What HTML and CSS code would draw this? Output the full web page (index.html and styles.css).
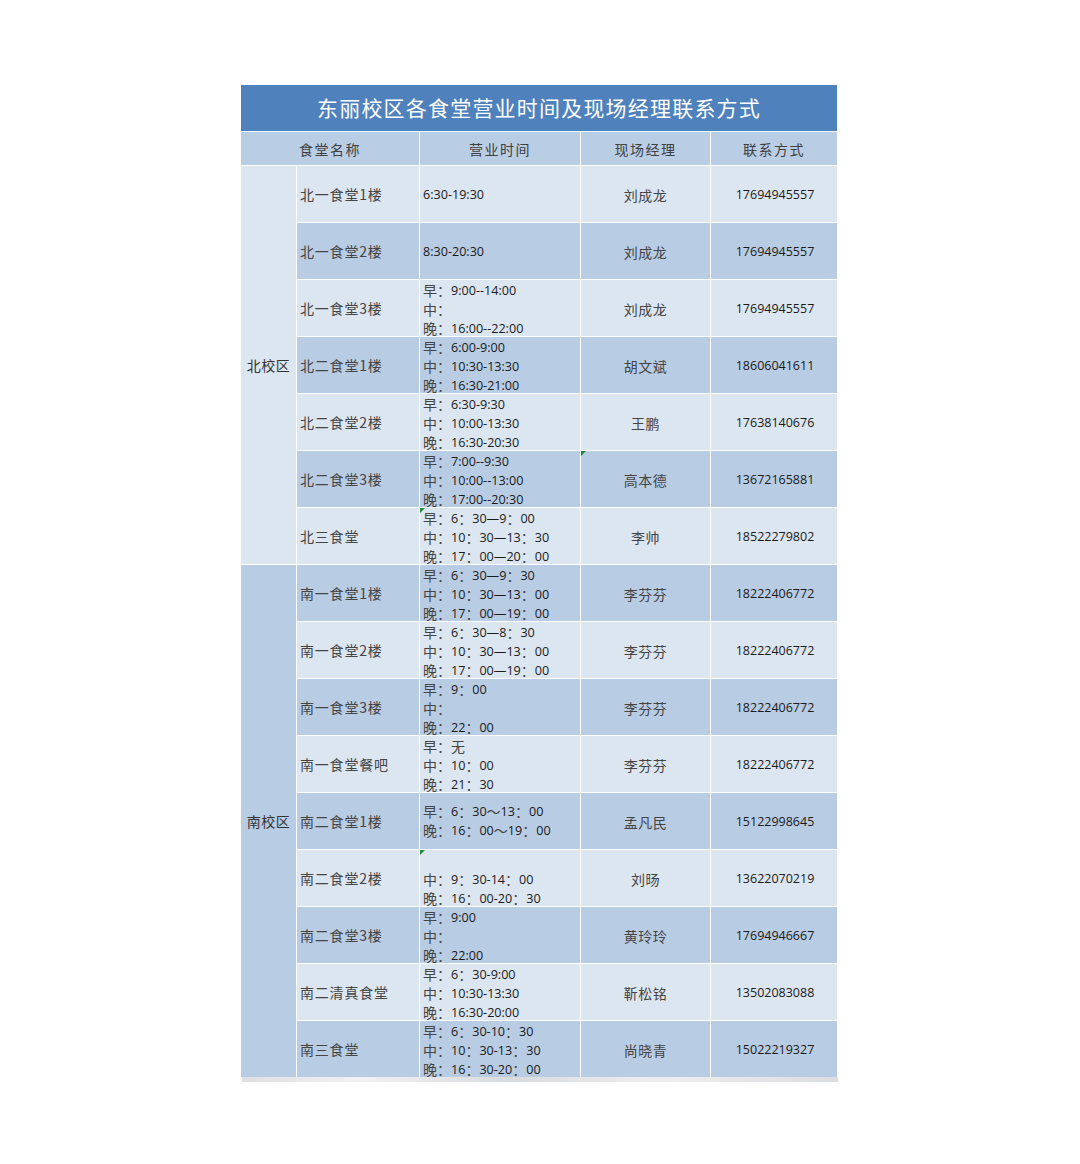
FILE: index.html
```html
<!DOCTYPE html>
<html lang="zh-CN">
<head>
<meta charset="utf-8">
<title>东丽校区各食堂营业时间及现场经理联系方式</title>
<link rel="stylesheet" href="styles.css">
</head>
<body>
<div class="sheet">
  <div class="title">东丽校区各食堂营业时间及现场经理联系方式</div>

  <div class="hd hd-name">食堂名称</div>
  <div class="hd">营业时间</div>
  <div class="hd">现场经理</div>
  <div class="hd">联系方式</div>

  <div class="campus north">北校区</div>
  <div class="c name l">北一食堂1楼</div>
  <div class="c time l">6:30-19:30</div>
  <div class="c mgr l">刘成龙</div>
  <div class="c tel l">17694945557</div>

  <div class="c name d">北一食堂2楼</div>
  <div class="c time d">8:30-20:30</div>
  <div class="c mgr d">刘成龙</div>
  <div class="c tel d">17694945557</div>

  <div class="c name l">北一食堂3楼</div>
  <div class="c time t3 l"><div><span class="k">早：</span>9:00--14:00</div><div><span class="k">中：</span></div><div><span class="k">晚：</span>16:00--22:00</div></div>
  <div class="c mgr l">刘成龙</div>
  <div class="c tel l">17694945557</div>

  <div class="c name d">北二食堂1楼</div>
  <div class="c time t3 d"><div><span class="k">早：</span>6:00-9:00</div><div><span class="k">中：</span>10:30-13:30</div><div><span class="k">晚：</span>16:30-21:00</div></div>
  <div class="c mgr d">胡文斌</div>
  <div class="c tel d">18606041611</div>

  <div class="c name l">北二食堂2楼</div>
  <div class="c time t3 l"><div><span class="k">早：</span>6:30-9:30</div><div><span class="k">中：</span>10:00-13:30</div><div><span class="k">晚：</span>16:30-20:30</div></div>
  <div class="c mgr l">王鹏</div>
  <div class="c tel l">17638140676</div>

  <div class="c name d">北二食堂3楼</div>
  <div class="c time t3 d"><div><span class="k">早：</span>7:00--9:30</div><div><span class="k">中：</span>10:00--13:00</div><div><span class="k">晚：</span>17:00--20:30</div></div>
  <div class="c mgr d mark">高本德</div>
  <div class="c tel d">13672165881</div>

  <div class="c name l">北三食堂</div>
  <div class="c time t3 l mark"><div><span class="k">早：</span>6<span class="k">：</span>30—9<span class="k">：</span>00</div><div><span class="k">中：</span>10<span class="k">：</span>30—13<span class="k">：</span>30</div><div><span class="k">晚：</span>17<span class="k">：</span>00—20<span class="k">：</span>00</div></div>
  <div class="c mgr l">李帅</div>
  <div class="c tel l">18522279802</div>

  <div class="campus south">南校区</div>
  <div class="c name d">南一食堂1楼</div>
  <div class="c time t3 d"><div><span class="k">早：</span>6<span class="k">：</span>30—9<span class="k">：</span>30</div><div><span class="k">中：</span>10<span class="k">：</span>30—13<span class="k">：</span>00</div><div><span class="k">晚：</span>17<span class="k">：</span>00—19<span class="k">：</span>00</div></div>
  <div class="c mgr d">李芬芬</div>
  <div class="c tel d">18222406772</div>

  <div class="c name l">南一食堂2楼</div>
  <div class="c time t3 l"><div><span class="k">早：</span>6<span class="k">：</span>30—8<span class="k">：</span>30</div><div><span class="k">中：</span>10<span class="k">：</span>30—13<span class="k">：</span>00</div><div><span class="k">晚：</span>17<span class="k">：</span>00—19<span class="k">：</span>00</div></div>
  <div class="c mgr l">李芬芬</div>
  <div class="c tel l">18222406772</div>

  <div class="c name d">南一食堂3楼</div>
  <div class="c time t3 d"><div><span class="k">早：</span>9<span class="k">：</span>00</div><div><span class="k">中：</span></div><div><span class="k">晚：</span>22<span class="k">：</span>00</div></div>
  <div class="c mgr d">李芬芬</div>
  <div class="c tel d">18222406772</div>

  <div class="c name l">南一食堂餐吧</div>
  <div class="c time t3 l"><div><span class="k">早：无</span></div><div><span class="k">中：</span>10<span class="k">：</span>00</div><div><span class="k">晚：</span>21<span class="k">：</span>30</div></div>
  <div class="c mgr l">李芬芬</div>
  <div class="c tel l">18222406772</div>

  <div class="c name d">南二食堂1楼</div>
  <div class="c time d"><div><span class="k">早：</span>6<span class="k">：</span>30<span class="k">～</span>13<span class="k">：</span>00</div><div><span class="k">晚：</span>16<span class="k">：</span>00<span class="k">～</span>19<span class="k">：</span>00</div></div>
  <div class="c mgr d">孟凡民</div>
  <div class="c tel d">15122998645</div>

  <div class="c name l">南二食堂2楼</div>
  <div class="c time t3 l mark"><div>&nbsp;</div><div><span class="k">中：</span>9<span class="k">：</span>30-14<span class="k">：</span>00</div><div><span class="k">晚：</span>16<span class="k">：</span>00-20<span class="k">：</span>30</div></div>
  <div class="c mgr l">刘旸</div>
  <div class="c tel l">13622070219</div>

  <div class="c name d">南二食堂3楼</div>
  <div class="c time t3 d"><div><span class="k">早：</span>9:00</div><div><span class="k">中：</span></div><div><span class="k">晚：</span>22:00</div></div>
  <div class="c mgr d">黄玲玲</div>
  <div class="c tel d">17694946667</div>

  <div class="c name l">南二清真食堂</div>
  <div class="c time t3 l"><div><span class="k">早：</span>6<span class="k">：</span>30-9:00</div><div><span class="k">中：</span>10:30-13:30</div><div><span class="k">晚：</span>16:30-20:00</div></div>
  <div class="c mgr l">靳松铭</div>
  <div class="c tel l">13502083088</div>

  <div class="c name d">南三食堂</div>
  <div class="c time t3 d"><div><span class="k">早：</span>6<span class="k">：</span>30-10<span class="k">：</span>30</div><div><span class="k">中：</span>10<span class="k">：</span>30-13<span class="k">：</span>30</div><div><span class="k">晚：</span>16<span class="k">：</span>30-20<span class="k">：</span>00</div></div>
  <div class="c mgr d">尚晓青</div>
  <div class="c tel d">15022219327</div>
</div>
<div class="shadow"></div>
</body>
</html>
```

FILE: styles.css
```css
html, body {
  margin: 0;
  padding: 0;
  background: #ffffff;
}

body {
  font-family: "Noto Sans CJK SC", sans-serif;
  color: #3c3c3c;
}

.sheet {
  width: 596px;
  margin: 85px auto 0;
  display: grid;
  grid-template-columns: 55px 122px 160px 129px 126px;
  grid-template-rows: 46px 33px repeat(16, 56px);
  gap: 1px;
  background: #ffffff;
  position: relative;
  left: -1px;
}

.title {
  grid-column: 1 / -1;
  background: #4f81bd;
  color: #ffffff;
  font-size: 21px;
  letter-spacing: 1.2px;
  display: flex;
  align-items: center;
  justify-content: center;
  padding-bottom: 2px;
}

.hd {
  background: #b9cde5;
  font-size: 14px;
  letter-spacing: 1.5px;
  display: flex;
  align-items: center;
  justify-content: center;
  color: #404040;
}

.hd-name {
  grid-column: span 2;
}

.campus {
  font-size: 14px;
  letter-spacing: 0.5px;
  display: flex;
  align-items: center;
  justify-content: center;
  color: #333333;
}

.north {
  grid-row: span 7;
  background: #dce6f1;
}

.south {
  grid-row: span 9;
  background: #b8cce4;
}

.c {
  overflow: hidden;
  display: flex;
  position: relative;
}

.l {
  background: #dce6f1;
}

.d {
  background: #b8cce4;
}

.name {
  align-items: center;
  padding-left: 3px;
  font-size: 14px;
  letter-spacing: 0.8px;
  color: #444444;
}

.time {
  flex-direction: column;
  justify-content: center;
  padding-left: 3px;
  font-family: "Open Sans", "Noto Sans CJK SC", sans-serif;
  font-size: 12.6px;
  line-height: 19px;
  color: #1a1a1a;
  white-space: nowrap;
}

.time > div {
  flex: none;
  height: 19px;
  line-height: 19px;
  display: flex;
  align-items: center;
}

.time .k {
  font-family: "Noto Sans CJK SC", sans-serif;
  font-size: 14px;
  line-height: 19px;
  color: #444444;
}

.t3 {
  padding-top: 2px;
}

.mgr {
  align-items: center;
  justify-content: center;
  font-size: 14px;
  letter-spacing: 0.5px;
  color: #444444;
  padding-top: 2px;
}

.tel {
  align-items: center;
  justify-content: center;
  font-family: "Open Sans", sans-serif;
  font-size: 12.5px;
  color: #1a1a1a;
  padding-top: 1px;
  padding-left: 2px;
}

.mark::before {
  content: "";
  position: absolute;
  left: 0;
  top: 0;
  width: 0;
  height: 0;
  border-top: 5px solid #1f8a2e;
  border-right: 5px solid transparent;
}

.shadow {
  width: 596px;
  height: 5px;
  margin: 0 auto;
  background: linear-gradient(90deg, #d6d8da, #eceef0 20%, #cfd2d5 45%, #e8eaec 70%, #d2d5d8);
  opacity: 0.8;
}
```
